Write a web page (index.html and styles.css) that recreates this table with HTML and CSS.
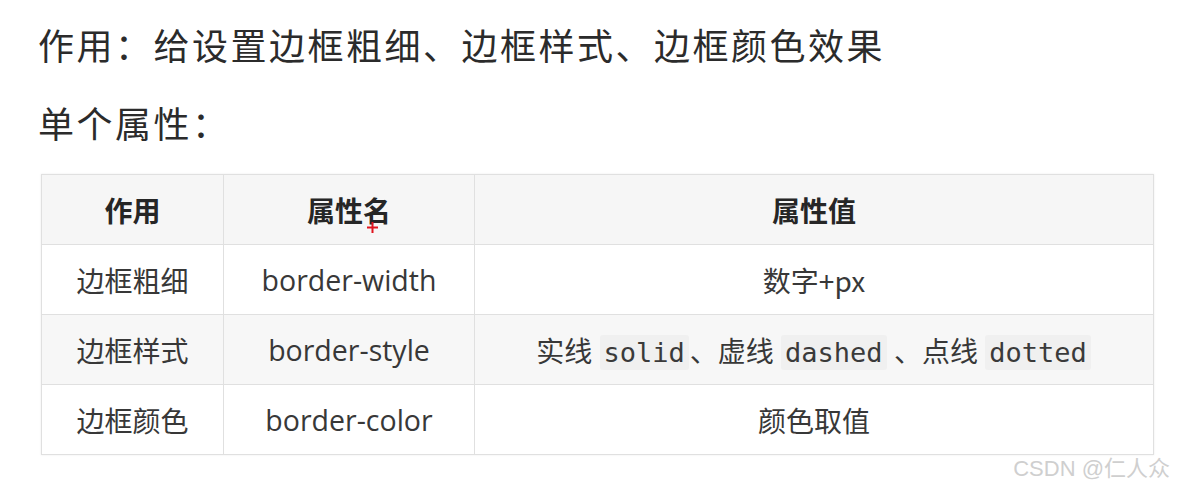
FILE: index.html
```html
<!DOCTYPE html>
<html lang="zh">
<head>
<meta charset="utf-8">
<title>border</title>
<link rel="stylesheet" href="styles.css">
</head>
<body>
<div class="page">
  <p class="line line-first">作用：给设置边框粗细、边框样式、边框颜色效果</p>
  <p class="line line-second">单个属性：</p>
  <table class="props">
    <colgroup>
      <col class="c1"><col class="c2"><col class="c3">
    </colgroup>
    <thead>
      <tr><th>作用</th><th>属性名</th><th>属性值</th></tr>
    </thead>
    <tbody>
      <tr><td>边框粗细</td><td class="lat">border-width</td><td>数字+px</td></tr>
      <tr class="alt"><td>边框样式</td><td class="lat">border-style</td><td>实线 <code>solid</code>、虚线 <code>dashed</code> 、点线 <code>dotted</code></td></tr>
      <tr><td>边框颜色</td><td class="lat">border-color</td><td>颜色取值</td></tr>
    </tbody>
  </table>
  <div class="cursor"><svg width="13" height="13" viewBox="0 0 13 13"><path d="M6.5 1v11M1 6.5h11" stroke="#e0141e" stroke-width="2"/></svg></div>
  <div class="mark">CSDN @仁人众</div>
</div>
</body>
</html>
```

FILE: styles.css
```css
html, body {
  margin: 0;
  padding: 0;
  background: #ffffff;
}
.page {
  position: relative;
  width: 1177px;
  height: 486px;
  padding: 18px 0 0 38px;
  box-sizing: border-box;
  font-family: "Noto Sans CJK SC", "Open Sans", sans-serif;
  color: #2b2b2b;
}
.line {
  margin: 0;
  font-size: 36px;
  line-height: 52px;
  letter-spacing: 2.5px;
  font-weight: 400;
}
.line-second {
  margin-top: 26px;
}
.props {
  margin: 26px 0 0 3px;
  border-collapse: collapse;
  width: 1112px;
  table-layout: fixed;
  box-shadow: 0 0 2px rgba(0,0,0,0.08);
}
.c1 { width: 182px; }
.c2 { width: 251px; }
.c3 { width: 679px; }
.props th, .props td {
  border: 1px solid #e0e0e0;
  height: 69px;
  padding: 0 4px;
  text-align: center;
  vertical-align: middle;
  font-size: 28px;
  color: #383838;
  white-space: nowrap;
}
.props th {
  background: #f6f6f6;
  font-weight: 700;
  color: #262626;
}
.props td {
  font-family: "Noto Sans CJK SC", sans-serif;
}
.props td.lat {
  font-family: "Open Sans", "Noto Sans CJK SC", sans-serif;
  font-size: 28.5px;
}
.props tr.alt td {
  background: #f7f7f7;
}
code {
  font-family: "DejaVu Sans Mono", "Liberation Mono", monospace;
  font-size: 27px;
  background: #f0f0f0;
  padding: 2px 4px;
  margin: 0 1px;
  border-radius: 3px;
  color: #3a3a3a;
}
.cursor {
  position: absolute;
  left: 366px;
  top: 221px;
  width: 13px;
  height: 13px;
}
.cursor svg { display: block; }
.mark {
  position: absolute;
  right: 7px;
  top: 450px;
  font-family: "Liberation Sans", "Noto Sans CJK SC", sans-serif;
  font-size: 22px;
  color: #cfcfcf;
  letter-spacing: 0;
}
```
